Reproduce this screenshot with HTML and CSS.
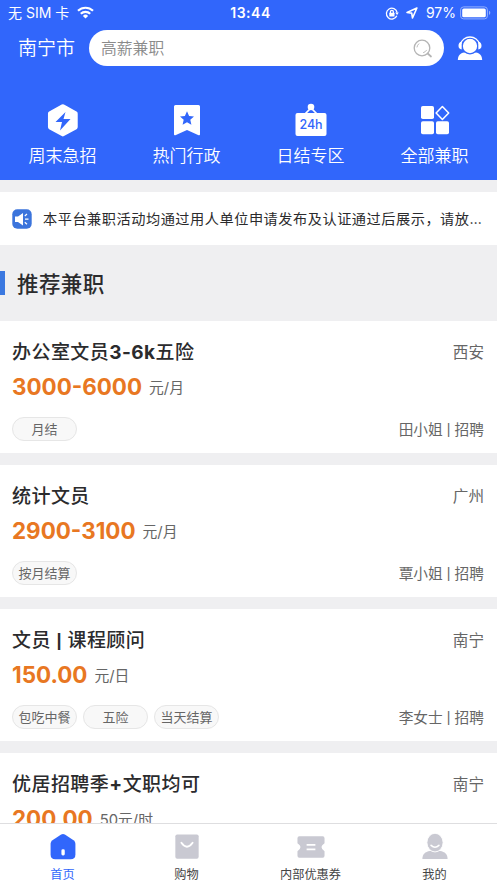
FILE: index.html
```html
<!DOCTYPE html>
<html lang="zh-CN">
<head>
<meta charset="utf-8">
<title>推荐兼职</title>
<link rel="stylesheet" href="styles.css">
</head>
<body>
<div class="app">
  <header class="header">
    <div class="status">
      <div class="status-left">
        <span>无 SIM 卡</span>
        <svg width="17" height="13" viewBox="0 0 17 13" fill="#fff"><path d="M8.500 12.500 5.900 9.900a3.700 3.700 0 0 1 5.200 0z"/><g fill="none" stroke="#fff" stroke-width="2.200"><path d="M3.800 7.800a6.600 6.600 0 0 1 9.400 0"/><path d="M1 4.800a10.700 10.700 0 0 1 15 0"/></g></svg>
      </div>
      <span class="time">13:44</span>
      <div class="status-right">
        <svg width="14" height="13" viewBox="0 0 14 13" fill="none" stroke="#fff" stroke-width="1.300"><path d="M11.800 8.700a5.400 5.400 0 1 1 .3-3.200"/><path d="M10.200 5.600h3.600l-1.700 2.500z" fill="#fff" stroke="none"/><rect x="4.300" y="5.800" width="5.200" height="3.800" rx=".5" fill="#fff" stroke="none"/><path d="M5.400 6V4.900a1.500 1.500 0 0 1 3 0V6"/></svg>
        <svg class="arrow" width="12" height="12" viewBox="0 0 12 12" fill="none" stroke="#fff" stroke-width="1.600" stroke-linejoin="round"><path d="M10.900 1 1 5.500l4.700.6.800 4.900z"/></svg>
        <span>97%</span>
        <svg class="battery" width="31" height="14" viewBox="0 0 31 14"><rect x=".6" y=".9" width="26.800" height="12" rx="3" fill="none" stroke="#94b0fd"/><rect x="2.200" y="2.500" width="23.600" height="8.800" rx="1.600" fill="#fff"/><path d="M29 4.800c1.800.7 1.800 3.500 0 4.200z" fill="#94b0fd"/></svg>
      </div>
    </div>
    <div class="search-row">
      <span class="city">南宁市</span>
      <div class="search">
        <span>高薪兼职</span>
        <svg width="20" height="20" viewBox="0 0 20 20" fill="none" stroke="#b4b4b4" stroke-width="1.300" stroke-linecap="round"><circle cx="9" cy="10" r="7.800"/><path d="m14.700 15.500 3.300 3" stroke-width="1.700"/><path d="M4 9a5.300 5.300 0 0 1 1.800-3.200M10.500 14.600a5 5 0 0 0 3-2.300" stroke-width=".9"/></svg>
      </div>
      <svg class="service" width="26" height="26" viewBox="0 0 26 26" fill="#fff"><path d="M.8 25c.2-4.300 2.500-7 6.300-7.500h11.800c3.800.5 6.100 3.200 6.300 7.500z"/><circle cx="13" cy="11" r="7.800" stroke="#3166fb" stroke-width="1.300"/><path d="M3.800 9a9.300 8.200 0 0 1 18.400 0" fill="none" stroke="#fff" stroke-width="1.300"/><path d="M4.700 6.500v8C2.500 14.200 1.500 12.700 1.500 10.700s1-3.700 3.200-4.200zM21.300 6.500v8c2.200-.3 3.200-1.800 3.200-3.800s-1-3.700-3.200-4.200z"/></svg>
    </div>
    <nav class="shortcuts">
      <a class="shortcut"><svg width="36" height="36" viewBox="0 0 36 36"><path d="m18 3.500 13.500 7.500v14.500L18 33 4.500 25.500V11z" fill="#fff" stroke="#fff" stroke-width="5" stroke-linejoin="round" transform="translate(1.100 1.400) scale(.93)"/><path d="M20.500 10 10.500 20H17l-2 8.500L25.500 17h-7z" fill="#3166fb"/></svg><span>周末急招</span></a>
      <a class="shortcut"><svg width="36" height="36" viewBox="0 0 36 36"><path d="M6.500 3h23Q31 3 31 4.500v27.800q0 1.500-1.400.9L18 28 6.400 33.200q-1.400.6-1.400-.9V4.500Q5 3 6.500 3z" fill="#fff"/><path d="m18 9.300 2.100 4.600 4.900.5-3.700 3.400 1.100 5L18 20.200l-4.400 2.600 1.100-5-3.700-3.400 4.900-.5z" fill="#3166fb"/></svg><span>热门行政</span></a>
      <a class="shortcut"><svg width="36" height="36" viewBox="0 0 36 36"><circle cx="18" cy="5" r="3.300" fill="#fff"/><path d="m12 12 6-6 6 6" fill="none" stroke="#fff" stroke-width="1.700"/><rect x="2.500" y="11" width="31" height="23" rx="2" fill="#fff"/><text class="hours" x="18" y="26.700" text-anchor="middle">24h</text></svg><span>日结专区</span></a>
      <a class="shortcut"><svg width="36" height="36" viewBox="0 0 36 36" fill="#fff"><rect x="4" y="4" width="13" height="13" rx="1.800"/><rect x="4" y="19.300" width="13" height="13" rx="1.800"/><rect x="19" y="19.300" width="13" height="13" rx="1.800"/><path d="m25.400 4.500 6.300 6.500-6.300 6.500-6.300-6.500z" fill="none" stroke="#fff" stroke-width="1.500" stroke-linejoin="round"/></svg><span>全部兼职</span></a>
    </nav>
  </header>
  <div class="notice">
    <svg width="20" height="20" viewBox="0 0 20 20"><rect x=".3" y=".3" width="19.400" height="19.400" rx="5" fill="#3b74dc"/><path d="M3 7.500h3l5-3.500v12.500L6 13H3z" fill="#fff"/><path d="m12.800 7 2.200-2M13 10.200h3.500M12.800 13.300l2.200 2" stroke="#fff" stroke-width="1.200"/></svg>
    <p>本平台兼职活动均通过用人单位申请发布及认证通过后展示，请放…</p>
  </div>
  <h2 class="section-title">推荐兼职</h2>
  <main class="jobs">
    <article class="job">
      <div class="line title-line"><h3>办公室文员<b>3-6k</b>五险</h3><span class="place">西安</span></div>
      <div class="line pay-line"><strong>3000-6000</strong><span>元/月</span></div>
      <div class="line tag-line"><div class="tags"><span class="tag">月结</span></div><span class="contact">田小姐 <i>|</i> 招聘</span></div>
    </article>
    <article class="job">
      <div class="line title-line"><h3>统计文员</h3><span class="place">广州</span></div>
      <div class="line pay-line"><strong>2900-3100</strong><span>元/月</span></div>
      <div class="line tag-line"><div class="tags"><span class="tag">按月结算</span></div><span class="contact">覃小姐 <i>|</i> 招聘</span></div>
    </article>
    <article class="job">
      <div class="line title-line"><h3>文员 <i>|</i> 课程顾问</h3><span class="place">南宁</span></div>
      <div class="line pay-line"><strong>150.00</strong><span>元/日</span></div>
      <div class="line tag-line"><div class="tags"><span class="tag">包吃中餐</span><span class="tag">五险</span><span class="tag">当天结算</span></div><span class="contact">李女士 <i>|</i> 招聘</span></div>
    </article>
    <article class="job">
      <div class="line title-line"><h3>优居招聘季<b>+</b>文职均可</h3><span class="place">南宁</span></div>
      <div class="line pay-line"><strong>200.00</strong><span>50元/时</span></div>
    </article>
  </main>
  <nav class="tabbar">
    <a class="tab active"><svg width="30" height="30" viewBox="0 0 30 30"><path d="M13 1.600q2-1.300 4 0l9.300 6.200q2 1.400 2 3.700V23q0 5-5 5H6.700q-5 0-5-5V11.500q0-2.300 2-3.700z" fill="#3166fb"/><rect x="13.300" y="17.500" width="3.600" height="6.500" rx="1.500" fill="#fff"/></svg><span>首页</span></a>
    <a class="tab"><svg width="30" height="30" viewBox="0 0 30 30"><rect x="2.500" y="1.500" width="25" height="26" rx="2" fill="#c9c9d2"/><path d="M9 10.500q6 8.500 12 0" fill="none" stroke="#fff" stroke-width="2" stroke-linecap="round"/></svg><span>购物</span></a>
    <a class="tab"><svg class="ticket" viewBox="0 0 30 30"><path d="M2.500 3.500h25q2 0 2 2V11q-6.500 4 0 8.500v5q0 2-2 2h-25q-2 0-2-2v-5q6.500-4.500 0-8.500V5.500q0-2 2-2z" fill="#c9c9d2"/><path d="M10.300 12.700h9.400M10.300 17.600h9.400" stroke="#fff" stroke-width="1.800"/></svg><span>内部优惠券</span></a>
    <a class="tab"><svg width="30" height="30" viewBox="0 0 30 30"><path d="M1.500 27.800c0-5 3-7.700 8-8.500h11c5 .8 8 3.500 8 8.500z" fill="#c9c9d2"/><ellipse cx="15" cy="10.300" rx="8.700" ry="10" fill="#c9c9d2" stroke="#fff" stroke-width="1"/><path d="M10.800 13.300q4.200 4 8.400 0" fill="none" stroke="#fff" stroke-width="1.700" stroke-linecap="round"/></svg><span>我的</span></a>
  </nav>
</div>
</body>
</html>
```

FILE: styles.css
```css
* { box-sizing: border-box; }
body {
  margin: 0;
  font-family: Inter, "Noto Sans CJK SC", sans-serif;
  color: #2b2b2d;
}
svg { display: block; flex: none; overflow: visible; }
i {
  display: inline-block;
  font-family: "Liberation Sans", sans-serif;
  font-size: .95em;
  font-style: normal;
  line-height: 1;
}
.app {
  width: 497px;
  height: 883px;
  display: flex;
  flex-direction: column;
  overflow: hidden;
  background: #efeff1;
}
.header {
  flex: none;
  height: 180px;
  background: #3166fb;
  color: #fff;
  font-weight: 350;
}
.status {
  display: grid;
  grid-template-columns: 1fr auto 1fr;
  align-items: center;
  height: 26px;
  padding: 0 6px 0 8px;
  font-size: 14px;
  font-weight: 400;
  line-height: 26px;
}
.status-left { display: flex; align-items: center; gap: 8px; }
.status-left svg { margin-top: -2px; }
.status-right { display: flex; align-items: center; justify-content: flex-end; }
.arrow { margin: 0 8px 0 7px; }
.battery { margin: -1px 0 0 4px; }
.time { padding-left: 2px; font-weight: 600; letter-spacing: .5px; }
.search-row {
  display: flex;
  align-items: center;
  height: 44px;
  padding-left: 18px;
}
.city { width: 71px; padding-top: 2px; font-size: 19px; line-height: 42px; }
.search {
  display: flex;
  align-items: center;
  justify-content: space-between;
  width: 355px;
  height: 36px;
  padding: 0 11px 0 12px;
  border-radius: 18px;
  background: #fff;
  color: #8a8a8a;
  font-size: 15.800px;
}
.search span { padding-bottom: 1px; }
.service { margin: 0 0 0 13px; }
.shortcuts {
  display: grid;
  grid-template-columns: repeat(4, 124px);
  justify-content: center;
  padding-top: 32px;
}
.shortcut { display: flex; flex-direction: column; align-items: center; }
.shortcut span {
  margin-top: 5px;
  font-size: 17px;
  line-height: 26px;
}
.hours { font-size: 12.500px; font-weight: 500; fill: #3166fb; }
.notice {
  display: flex;
  flex: none;
  align-items: center;
  height: 53px;
  margin-top: 12px;
  padding-left: 12px;
  background: #fff;
}
.notice p {
  margin: 0 0 2px 11px;
  font-size: 14.200px;
  letter-spacing: .52px;
  white-space: nowrap;
}
.section-title {
  display: flex;
  flex: none;
  align-items: center;
  height: 76px;
  margin: 0;
  padding-bottom: 1px;
  font-size: 21.500px;
  font-weight: 500;
  letter-spacing: .4px;
}
.section-title::before {
  content: "";
  width: 5px;
  height: 24px;
  margin-right: 12px;
  background: #3b78e0;
}
.jobs {
  display: flex;
  flex: 1;
  flex-direction: column;
  gap: 12px;
  min-height: 0;
  overflow: hidden;
}
.job {
  flex: none;
  height: 132px;
  padding: 12px 13px 0 12px;
  background: #fff;
}
.line { display: flex; align-items: center; }
.title-line { justify-content: space-between; height: 36px; }
h3 { margin: 0 0 2px; font-size: 19px; font-weight: 500; letter-spacing: .45px; }
h3 b { font-weight: 700; }
h3 i { font-weight: 700; transform: translateY(-1px); }
.place { padding-bottom: 1px; color: #666; font-size: 15.600px; }
.pay-line { height: 36px; }
.pay-line strong { margin-bottom: 1px; color: #e87722; font-size: 22.400px; font-weight: 700; }
.pay-line span { margin: 0 0 2px 7px; color: #666; font-size: 14.800px; }
.tag-line { justify-content: space-between; height: 48px; }
.tags { display: flex; gap: 6px; }
.tag {
  width: 65px;
  height: 24px;
  border: 1px solid #e6e6e6;
  border-radius: 12px;
  background: #f8f8f8;
  color: #666;
  font-size: 13px;
  line-height: 22px;
  text-align: center;
}
.contact { padding-bottom: 2px; color: #666; font-size: 14.700px; }
.contact i { transform: translateY(-1px); }
.tabbar {
  display: grid;
  flex: none;
  grid-template-columns: repeat(4, 124px);
  justify-content: center;
  height: 60px;
  padding-top: 9px;
  border-top: 1px solid #dedee0;
  background: #fff;
}
.tab {
  display: flex;
  flex-direction: column;
  align-items: center;
  color: #444;
  font-size: 12.200px;
  line-height: 18px;
}
.tab svg { width: 28px; height: 28px; }
.tab .ticket { width: 30px; }
.tab span { margin-top: 5px; }
.tab.active { color: #3166fb; }
```
